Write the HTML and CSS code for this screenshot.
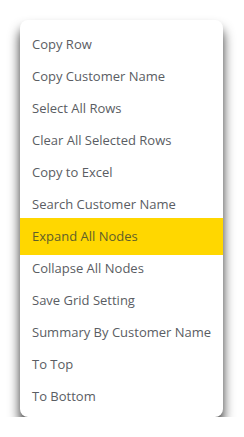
FILE: index.html
```html
<!DOCTYPE html>
<html lang="en">
<head>
  <meta charset="UTF-8" />
  <meta name="viewport" content="width=device-width, initial-scale=1.0" />
  <title>Context Menu</title>
  <link rel="stylesheet" href="styles.css">
</head>
<body>
  <ul class="menu">
    <li class="menu-item">Copy Row</li>
    <li class="menu-item">Copy Customer Name</li>
    <li class="menu-item">Select All Rows</li>
    <li class="menu-item">Clear All Selected Rows</li>
    <li class="menu-item">Copy to Excel</li>
    <li class="menu-item">Search Customer Name</li>
    <li class="menu-item active">Expand All Nodes</li>
    <li class="menu-item">Collapse All Nodes</li>
    <li class="menu-item">Save Grid Setting</li>
    <li class="menu-item">Summary By Customer Name</li>
    <li class="menu-item">To Top</li>
    <li class="menu-item">To Bottom</li>
  </ul>
</body>
</html>
```

FILE: styles.css
```css
body { margin: 0; padding: 20px 0 0 20px; background: #fff; font-family: "Open Sans", "Noto Sans", sans-serif; }
.menu { list-style: none; margin: 0; padding: 8px 0 5px; width: 203px; background: #fff; border-radius: 8px; box-shadow: 0 9px 12px rgba(0,0,0,0.8); }
.menu-item { height: 32px; line-height: 32px; padding: 0 12px; font-size: 13px; color: #5a5d63; white-space: nowrap; }
.menu-item.active { background: #ffd700; color: #5f5f2a; height: 37px; line-height: 37px; margin: -2px 0 -3px; position: relative; }
```
